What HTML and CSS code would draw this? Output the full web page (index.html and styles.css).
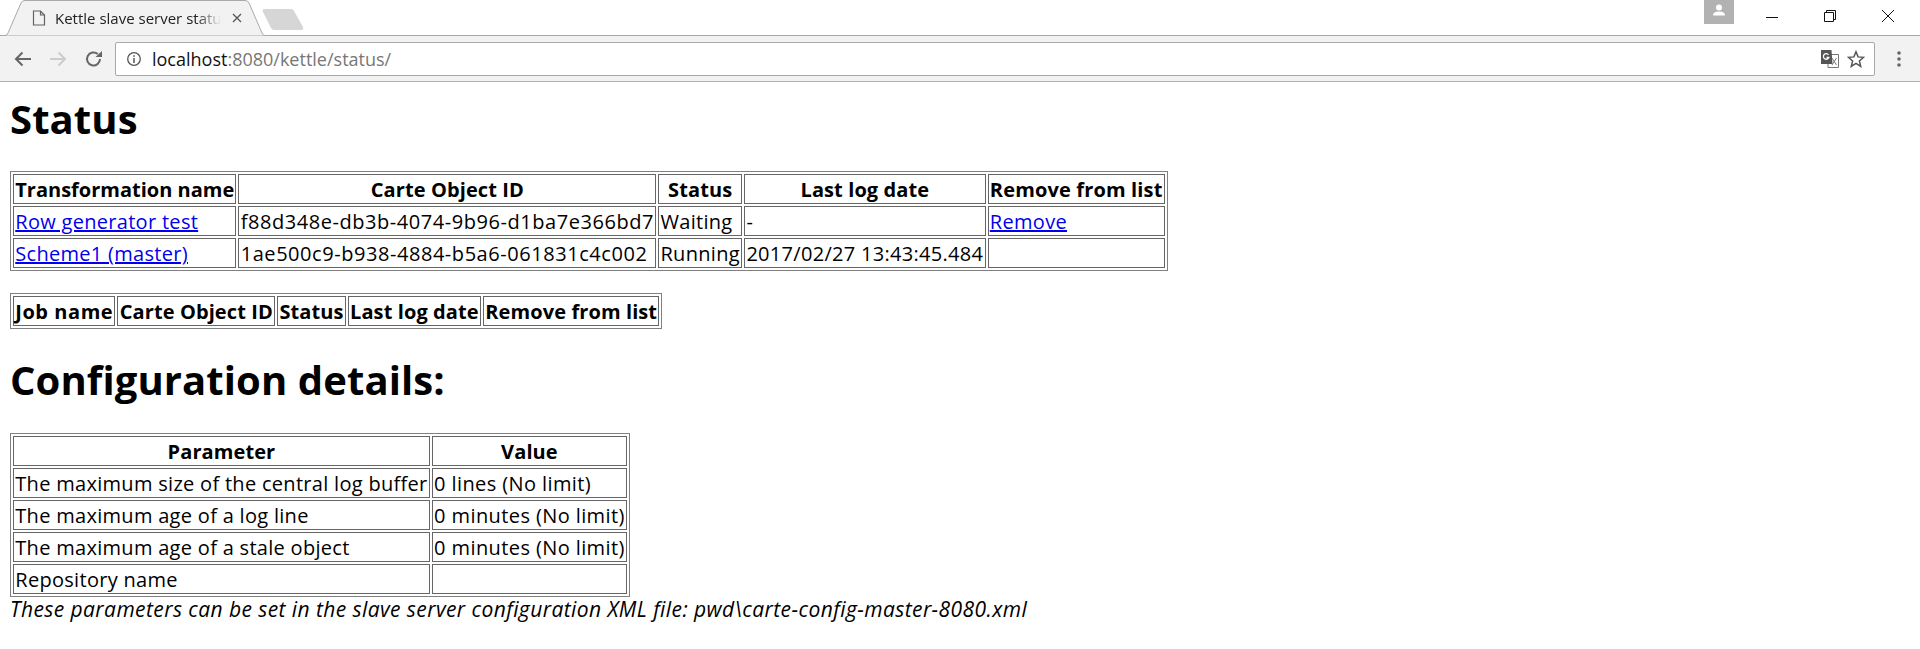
FILE: index.html
```html
<!DOCTYPE html>
<html lang="en">
<head>
<meta charset="utf-8">
<title>Kettle slave server status</title>
<link rel="stylesheet" href="styles.css">
</head>
<body>
<header class="chrome">
  <div class="tabstrip">
    <div class="tab">
      <svg class="tab-shape" width="266" height="36" viewBox="0 0 266 36"><path d="M0 35.500H5Q7 35.500 8 33L21 3Q22 .5 25 .5H245Q248 .5 249 3L262 33Q263 35.500 265 35.500" fill="#f2f2f2" stroke="#a9a9a9"/></svg>
      <svg class="tab-icon" width="14" height="16" viewBox="0 0 14 16"><path d="M1.500 1H8.500L12.500 5V15H1.500ZM8.500 1V5H12.500" fill="none" stroke="#5f6368" stroke-width="1.200"/></svg>
      <span class="tab-title">Kettle slave server status</span>
      <svg class="tab-close" width="10" height="10" viewBox="0 0 10 10"><path d="M1 1L9 9M9 1L1 9" stroke="#555" stroke-width="1.300"/></svg>
    </div>
    <svg class="newtab" width="42" height="21" viewBox="0 0 42 21"><path d="M2 0H29Q31 0 32 2L41 18Q42 21 39 21H12Q10 21 9 19L1 3Q0 0 2 0Z" fill="#d6d6d6"/></svg>
    <div class="spacer"></div>
    <div class="profile"><svg width="14" height="12" viewBox="0 0 14 12"><circle cx="7" cy="3.500" r="3" fill="#fff"/><path d="M1 11.500Q1 7.500 7 7.500T13 11.500Z" fill="#fff"/></svg></div>
    <div class="winbtn"><svg width="14" height="14" viewBox="0 0 14 14"><path d="M1 8.500H13" stroke="#111"/></svg></div>
    <div class="winbtn"><svg width="14" height="14" viewBox="0 0 14 14"><path d="M1.500 3.500H10.500V12.500H1.500ZM3.500 3.500V1.500H12.500V10.500H10.500" fill="none" stroke="#111"/></svg></div>
    <div class="winbtn"><svg width="14" height="14" viewBox="0 0 14 14"><path d="M1 1L13 13M13 1L1 13" stroke="#111"/></svg></div>
  </div>
  <div class="toolbar">
    <svg class="navicon" width="18" height="16" viewBox="0 0 18 16"><path d="M17 8H2M8.500 1.500L2 8L8.500 14.500" fill="none" stroke="#666" stroke-width="2"/></svg>
    <svg class="navicon" width="18" height="16" viewBox="0 0 18 16"><path d="M1 8H16M9.500 1.500L16 8L9.500 14.500" fill="none" stroke="#ccc" stroke-width="2"/></svg>
    <svg class="navicon reload" width="18" height="18" viewBox="0 0 18 18"><path d="M15 9A6.500 6.500 0 1 1 12.800 4.100" fill="none" stroke="#666" stroke-width="2"/><path d="M10.500 7H17V1Z" fill="#666"/></svg>
    <div class="omnibox">
      <svg class="info" width="16" height="16" viewBox="0 0 16 16"><circle cx="8" cy="8" r="6.300" fill="none" stroke="#555" stroke-width="1.300"/><path d="M8 7V12M8 4.200V5.800" stroke="#555" stroke-width="1.500"/></svg>
      <span class="url"><span class="host">localhost</span>:8080/kettle/status/</span>
      <svg class="translate" width="18" height="18" viewBox="0 0 18 18"><path d="M7 4.500H17.500V17.500H7Z" fill="#fff" stroke="#777"/><path d="M0 0H10.500L11.500 14H0Z" fill="#555"/><path d="M11 8L15.500 15M15.500 8L11 15" stroke="#777"/><path d="M7.500 4.800A2.800 2.800 0 1 0 7.800 7.500H5.500" fill="none" stroke="#fff" stroke-width="1.300"/></svg>
      <svg class="star" width="18" height="18" viewBox="0 0 18 18"><path d="M9 1.800L11.100 6.900L16.600 7.300L12.400 10.900L13.700 16.300L9 13.400L4.300 16.300L5.600 10.900L1.400 7.300L6.900 6.900Z" fill="none" stroke="#555" stroke-width="1.500"/></svg>
    </div>
    <svg class="menu" width="4" height="16" viewBox="0 0 4 16"><circle cx="2" cy="2" r="1.800" fill="#666"/><circle cx="2" cy="8" r="1.800" fill="#666"/><circle cx="2" cy="14" r="1.800" fill="#666"/></svg>
  </div>
</header>
<main class="page">
  <h1>Status</h1>
  <table>
    <tr><th class="tight">Transformation name</th><th>Carte Object ID</th><th>Status</th><th>Last log date</th><th class="wide">Remove from list</th></tr>
    <tr><td><a href="#">Row generator test</a></td><td class="id">f88d348e-db3b-4074-9b96-d1ba7e366bd7</td><td>Waiting</td><td>-</td><td><a href="#">Remove</a></td></tr>
    <tr><td><a href="#">Scheme1 (master)</a></td><td class="id">1ae500c9-b938-4884-b5a6-061831c4c002</td><td>Running</td><td>2017/02/27 13:43:45.484</td><td></td></tr>
  </table>
  <p class="gap"></p>
  <table>
    <tr><th class="job">Job name</th><th>Carte Object ID</th><th>Status</th><th>Last log date</th><th>Remove from list</th></tr>
  </table>
  <h1>Configuration details:</h1>
  <table>
    <tr><th>Parameter</th><th>Value</th></tr>
    <tr><td>The maximum size of the central log buffer</td><td class="val">0 lines (No limit)</td></tr>
    <tr><td>The maximum age of a log line</td><td class="val">0 minutes (No limit)</td></tr>
    <tr><td>The maximum age of a stale object</td><td class="val">0 minutes (No limit)</td></tr>
    <tr><td>Repository name</td><td></td></tr>
  </table>
  <em class="note">These parameters can be set in the slave server configuration XML file: pwd\carte-config-master-8080.xml</em>
</main>
</body>
</html>
```
FILE: styles.css
```css
* { box-sizing: border-box; }
html, body { margin: 0; padding: 0; background: #fff; height: 100%; }
body { font-family: "Open Sans", "Noto Sans", sans-serif; font-size: 20px; color: #000; }
.tabstrip { height: 36px; display: flex; background: #fff; align-items: flex-start; position: relative; }
.tabstrip::after { content: ""; position: absolute; left: 0; right: 0; bottom: 0; height: 1px; background: #a9a9a9; }
.tab { position: relative; z-index: 1; width: 262px; height: 36px; display: flex; align-items: center; padding: 0 0 0 32px; flex: none; }
.tab-shape { position: absolute; left: 0; top: 0; }
.tab-icon, .tab-title, .tab-close { position: relative; }
.tab-title { margin-left: 9px; width: 166px; overflow: hidden; white-space: nowrap; font-size: 15px; color: #222; -webkit-mask-image: linear-gradient(to right, #000 85%, transparent); mask-image: linear-gradient(to right, #000 85%, transparent); }
.tab-close { margin-left: 11px; }
.newtab { margin: 9px 0 0 0; flex: none; position: relative; z-index: 1; }
.spacer { flex: 1; }
.profile { width: 30px; height: 24px; background: #b2b2b2; display: flex; align-items: center; justify-content: center; margin-right: 9px; padding-bottom: 4px; }
.winbtn { width: 58px; height: 32px; display: flex; align-items: center; justify-content: center; }
.winbtn:last-child { margin-right: 3px; }
.toolbar { height: 46px; background: #f2f2f2; border-bottom: 1px solid #b0b0b0; display: flex; align-items: center; padding: 1px 19px 0 14px; }
.navicon { flex: none; margin-right: 17px; }
.reload { margin-left: 1px; margin-right: 16px; }
.omnibox { flex: 1; height: 34px; background: #fff; border: 1px solid #a9a9a9; border-radius: 2px; display: flex; align-items: center; padding: 0 9px 0 10px; margin-left: -4px; margin-right: 22px; }
.url { margin-left: 10px; font-size: 18px; color: #777; flex: 1; }
.host { color: #111; }
.star { margin-left: 8px; }
.page { padding: 0 10px 20px; }
h1 { font-size: 40px; font-weight: 700; margin: 0; line-height: 54px; letter-spacing: .1px; }
.page > h1:first-child { margin-top: 10px; margin-bottom: 25px; }
.page > table + h1 { margin-top: 24px; margin-bottom: 26px; }
.gap { margin: 0; height: 22px; }
table { border-collapse: separate; border-spacing: 2.5px; border: 1px solid #808080; }
th, td { border: 1px solid #666; padding: 2px 1.25px 0; line-height: 26px; height: 30px; white-space: nowrap; }
th { letter-spacing: .1px; }
th.tight { letter-spacing: 0; }
th.wide { letter-spacing: .15px; }
th.job { letter-spacing: .55px; }
td { letter-spacing: .3px; }
td.id { letter-spacing: .55px; }
td.val { letter-spacing: .4px; }
a { color: #0000ee; }
.note { display: block; line-height: 24px; font-size: 21px; letter-spacing: .42px; }
```
